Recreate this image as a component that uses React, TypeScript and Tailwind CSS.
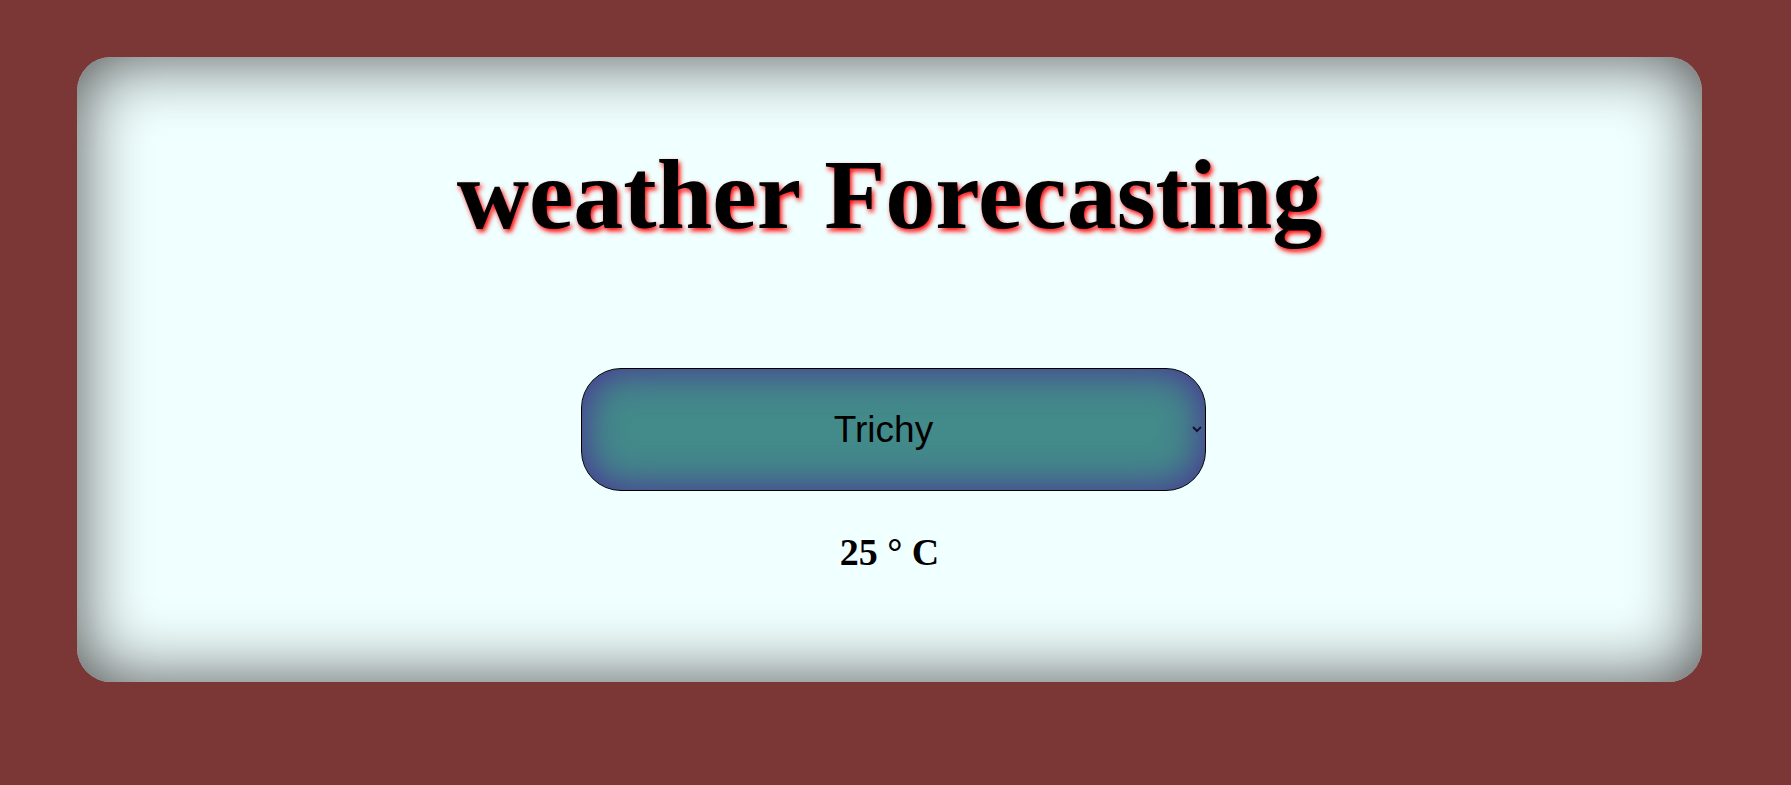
import { useState } from 'react';

const cities = ['Trichy', 'Chennai', 'Madurai', 'Coimbatore'];
const temps: Record<string, number> = { Trichy: 25, Chennai: 30, Madurai: 28, Coimbatore: 22 };

export default function App() {
    const [city, setCity] = useState('Trichy');

    return (
        <div className="min-h-[785px] w-full bg-[#7b3636] pt-[57px] pl-[77px]">
            <div className="w-[1625px] h-[625px] rounded-[34px] bg-[#f0ffff] shadow-[inset_0_0_70px_#4a4a4a] flex flex-col items-center pt-[80px] font-['Liberation_Serif',serif]">
                <h1 className="text-[100px] font-bold leading-[115px] text-black [text-shadow:2px_3px_5px_#ff0000]">weather Forecasting</h1>

                <select
                    value={city}
                    onChange={(e) => setCity(e.target.value)}
                    className="mt-[116px] ml-[8px] w-[625px] h-[123px] rounded-[40px] border-[1.5px] border-black bg-[#438a8a] shadow-[inset_0_0_40px_#4a2a96] text-center text-[37px] text-black font-['Liberation_Sans',Arial,sans-serif] pr-[8px]"
                >
                    {cities.map((c) => (
                        <option key={c} value={c}>{c}</option>
                    ))}
                </select>

                <h2 className="mt-[40px] text-[38px] font-bold leading-[42px] text-black">{temps[city]} ° C</h2>
            </div>
        </div>
    );
}
